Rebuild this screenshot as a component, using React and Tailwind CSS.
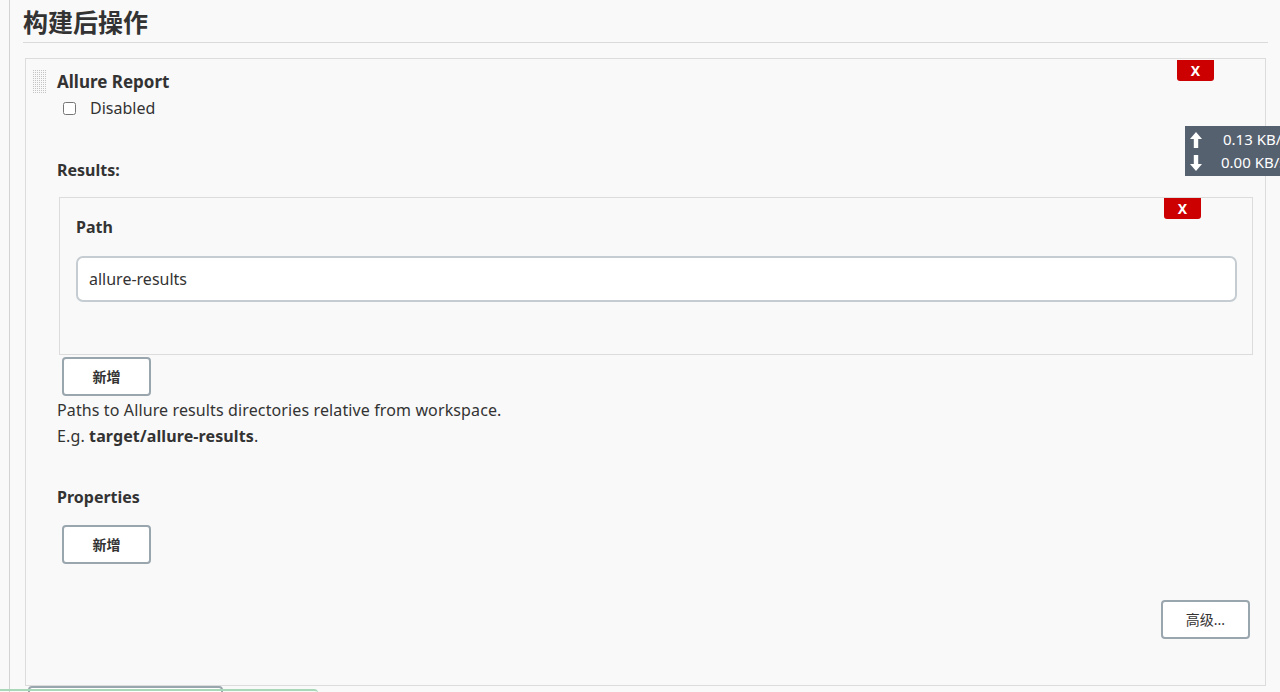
import React, { useState } from 'react';

const font = { fontFamily: '"Noto Sans", "Noto Sans CJK SC", sans-serif' };

const DragHandle = () => (
  <svg width="14" height="24" className="shrink-0">
    <defs>
      <pattern id="dots" width="2" height="2" patternUnits="userSpaceOnUse">
        <rect width="1" height="1" fill="#c4c4c4" />
      </pattern>
    </defs>
    <rect width="14" height="24" fill="url(#dots)" />
  </svg>
);

const DeleteButton = ({ className }) => (
  <button
    type="button"
    className={`absolute w-[37px] h-[21px] bg-[#cc0000] rounded-b-[3px] text-white text-[14px] font-bold leading-[21px] ${className}`}
  >
    X
  </button>
);

const AddButton = ({ label = '新增', className = '' }) => (
  <button
    type="button"
    className={`w-[89px] h-[39px] bg-white border-2 border-[#9aa6ae] rounded-[4px] text-[14px] font-bold text-[#333] ${className}`}
  >
    {label}
  </button>
);

const Arrow = ({ down }) => (
  <svg width="12" height="16" viewBox="0 0 12 16" className={`shrink-0 ${down ? 'rotate-180' : ''}`}>
    <path d="M6 0 L12 7 L8.2 7 L8.2 16 L3.8 16 L3.8 7 L0 7 Z" fill="white" />
  </svg>
);

const App = () => {
  const [disabled, setDisabled] = useState(false);
  const [path, setPath] = useState('allure-results');

  return (
    <div className="relative h-[692px] overflow-hidden bg-[#f9f9f9] text-[#333]" style={font}>
      <div className="ml-[9px] h-full border-l border-[#d3d3d3] pl-[13px] pr-[12px]">
        <h2 className="pt-[6px] pb-[3px] text-[25px] leading-[33px] font-bold border-b border-[#dadada]">
          构建后操作
        </h2>

        <div className="relative mt-[15px] mx-[2px] border border-[#dcdcdc] bg-[#f9f9f9] pl-[7px] pr-[12px] pt-[11px] pb-[46px]">
          <DeleteButton className="top-[1px] right-[51px]" />
          <div className="flex">
            <DragHandle />
            <div className="ml-[10px] flex-1">
              <div className="text-[17px] leading-6 font-bold">Allure Report</div>
              <label className="mt-[2px] flex items-center h-6 text-[16px]">
                <input
                  type="checkbox"
                  checked={disabled}
                  onChange={(e) => setDisabled(e.target.checked)}
                  className="ml-[6px] w-[13px] h-[13px]"
                />
                <span className="ml-[14px]">Disabled</span>
              </label>

              <div className="mt-[38px] text-[16px] leading-6 font-bold">Results:</div>

              <div className="relative mt-[15px] ml-[2px] border border-[#dcdcdc] pl-[16px] pr-[15px] pt-[17px] pb-[52px]">
                <DeleteButton className="top-0 right-[51px]" />
                <div className="text-[16px] leading-6 font-bold">Path</div>
                <input
                  type="text"
                  value={path}
                  onChange={(e) => setPath(e.target.value)}
                  className="mt-[17px] block w-full h-[46px] bg-white border-2 border-[#c5cdd2] rounded-[7px] px-[11px] text-[16px] text-[#333] outline-none"
                />
              </div>

              <AddButton className="mt-[2px] ml-[5px]" />

              <p className="mt-[1px] text-[16px] leading-[26px] tracking-[0.12px]">
                Paths to Allure results directories relative from workspace.
                <br />
                E.g. <b>target/allure-results</b>.
              </p>

              <div className="mt-[36px] text-[16px] leading-6 font-bold">Properties</div>
              <AddButton className="mt-[16px] ml-[5px]" />

              <div className="mt-[36px] flex justify-end pr-[3px]">
                <AddButton label="高级..." className="font-normal" />
              </div>
            </div>
          </div>
        </div>
      </div>

      <div className="absolute left-[28px] top-[686px] w-[195px] h-[10px] border-2 border-[#9aa6ae] rounded-t-[4px] bg-white" />
      <div className="absolute left-0 top-[689px] w-[318px] h-[6px] border-t-2 border-[#a8d8b8] rounded-tr-[4px]" />

      <div className="absolute left-[1185px] top-[126px] w-[110px] h-[50px] bg-[#56616f] text-white text-[15px] leading-[23px] py-[2px] pl-[5px] whitespace-nowrap">
        <div className="flex items-center">
          <Arrow />
          <span className="ml-[21px] shrink-0">0.13 KB/s</span>
        </div>
        <div className="flex items-center">
          <Arrow down />
          <span className="ml-[19px] shrink-0">0.00 KB/s</span>
        </div>
      </div>
    </div>
  );
};

export default App;
